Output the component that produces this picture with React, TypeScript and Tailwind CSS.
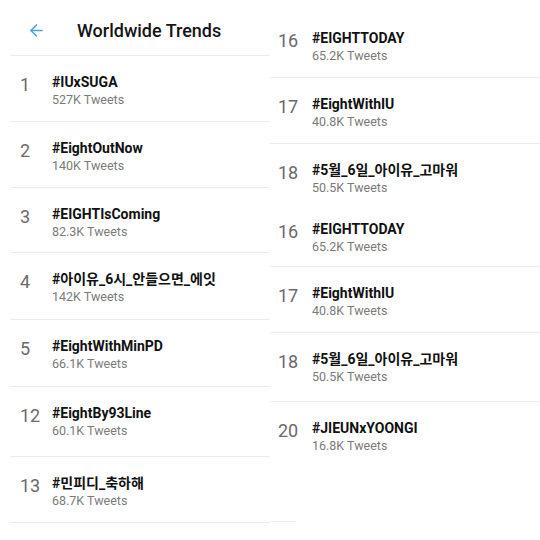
import { ArrowLeft } from "lucide-react";

type Trend = {
  rank: number;
  tag: string;
  count: string;
  h: string;
  line: string;
};

const leftTrends: Trend[] = [
  { rank: 1, tag: "#IUxSUGA", count: "527K Tweets", h: "h-[66px]", line: "border-b border-[#ececec]" },
  { rank: 2, tag: "#EightOutNow", count: "140K Tweets", h: "h-[66px]", line: "border-b border-[#ececec]" },
  { rank: 3, tag: "#EIGHTIsComing", count: "82.3K Tweets", h: "h-[65px]", line: "border-b border-[#ececec]" },
  { rank: 4, tag: "#아이유_6시_안들으면_에잇", count: "142K Tweets", h: "h-[67px]", line: "border-b border-[#ececec]" },
  { rank: 5, tag: "#EightWithMinPD", count: "66.1K Tweets", h: "h-[67px]", line: "border-b border-[#ececec]" },
  { rank: 12, tag: "#EightBy93Line", count: "60.1K Tweets", h: "h-[70px]", line: "border-b border-[#ececec]" },
  { rank: 13, tag: "#민피디_축하해", count: "68.7K Tweets", h: "h-[66px]", line: "border-b border-[#ececec]" },
];

const rightTrends: Trend[] = [
  { rank: 16, tag: "#EIGHTTODAY", count: "65.2K Tweets", h: "h-[66px]", line: "border-b border-[#ececec]" },
  { rank: 17, tag: "#EightWithIU", count: "40.8K Tweets", h: "h-[66px]", line: "border-b border-[#ececec]" },
  { rank: 18, tag: "#5월_6일_아이유_고마워", count: "50.5K Tweets", h: "h-[59px]", line: "" },
  { rank: 16, tag: "#EIGHTTODAY", count: "65.2K Tweets", h: "h-[64px]", line: "border-b border-[#ececec]" },
  { rank: 17, tag: "#EightWithIU", count: "40.8K Tweets", h: "h-[66px]", line: "border-b border-[#ececec]" },
  { rank: 18, tag: "#5월_6일_아이유_고마워", count: "50.5K Tweets", h: "h-[69px]", line: "border-b border-[#ececec]" },
  { rank: 20, tag: "#JIEUNxYOONGI", count: "16.8K Tweets", h: "h-[120px]", line: "" },
];

const TrendRow = ({ t, numW }: { t: Trend; numW: string }) => (
  <div className={`flex ${t.h} ${t.line}`}>
    <div className={`${numW} pt-[19px] text-[18px] leading-[20px] text-[#6a6a6a]`}>{t.rank}</div>
    <div className="pt-[16px]">
      <div className="text-[14px] leading-[20px] font-bold text-[#111]">{t.tag}</div>
      <div className="text-[12.5px] leading-[16px] text-[#7a7a7a]">{t.count}</div>
    </div>
  </div>
);

export default function App() {
  return (
    <div
      className="w-[540px] h-[540px] bg-white overflow-hidden flex"
      style={{ fontFamily: 'Roboto, "Noto Sans CJK KR", sans-serif' }}
    >
      <div className="w-[270px] shrink-0">
        <div className="h-[56px] ml-[10px] pt-[6px] flex items-center border-b border-[#ececec]">
          <ArrowLeft className="ml-[17px] w-[19px] h-[19px] text-[#4aa3df]" strokeWidth={2} />
          <h1 className="ml-[31px] text-[18px] font-medium text-[#141414]">Worldwide Trends</h1>
        </div>
        <div className="ml-[10px]">
          {leftTrends.map((t, i) => (
            <TrendRow key={i} t={t} numW="w-[42px] pl-[10px]" />
          ))}
        </div>
      </div>
      <div className="w-[270px] shrink-0 pt-[12px]">
        {rightTrends.map((t, i) => (
          <TrendRow key={i} t={t} numW="w-[42px] pl-[8px]" />
        ))}
        <div className="-mt-[1px] w-[26px] border-b border-[#ececec]" />
      </div>
    </div>
  );
}
